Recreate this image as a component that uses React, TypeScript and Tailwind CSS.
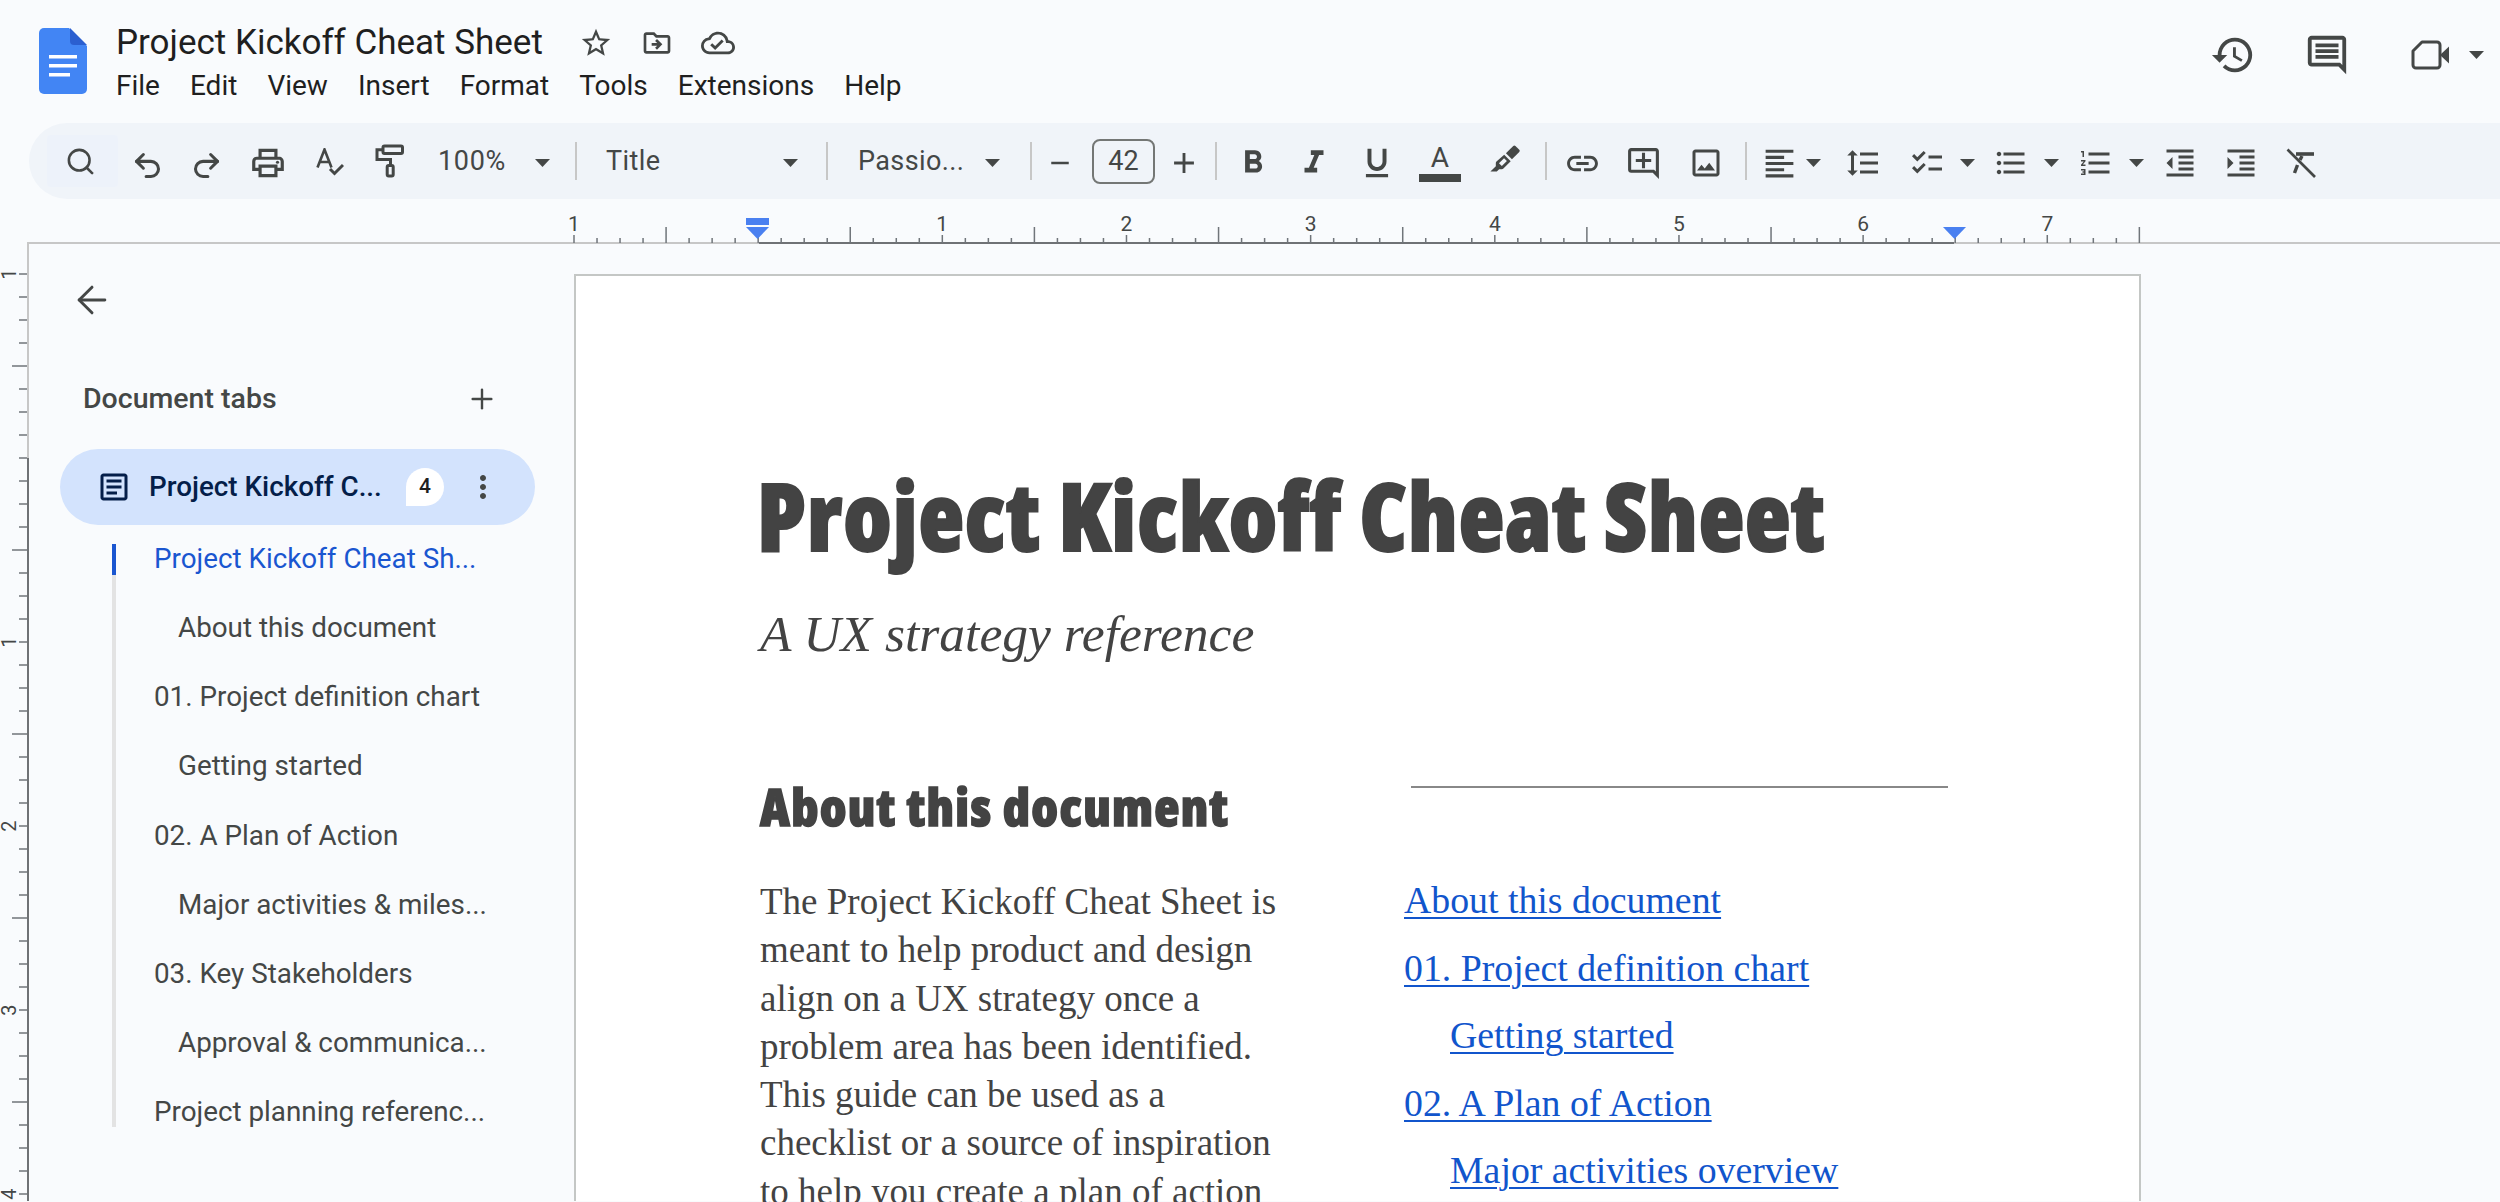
import { ArrowLeft, Plus, Redo2, Search, Undo2 } from 'lucide-react';
import {
  MdAdd,
  MdChecklist,
  MdFormatAlignLeft,
  MdFormatBold,
  MdFormatIndentDecrease,
  MdFormatIndentIncrease,
  MdFormatItalic,
  MdFormatLineSpacing,
  MdFormatListBulleted,
  MdFormatListNumbered,
  MdFormatUnderlined,
  MdHistory,
  MdLink,
  MdMoreVert,
  MdOutlineAddComment,
  MdOutlineArticle,
  MdOutlineCloudDone,
  MdOutlineComment,
  MdOutlineDriveFileMove,
  MdOutlineImage,
  MdOutlineLocalPrintshop,
  MdRemove,
  MdStarBorder,
} from 'react-icons/md';

const MENU = ['File', 'Edit', 'View', 'Insert', 'Format', 'Tools', 'Extensions', 'Help'];

const OUTLINE = [
  { label: 'Project Kickoff Cheat Sh...', indent: false, active: true },
  { label: 'About this document', indent: true },
  { label: '01. Project definition chart', indent: false },
  { label: 'Getting started', indent: true },
  { label: '02. A Plan of Action', indent: false },
  { label: 'Major activities & miles...', indent: true },
  { label: '03. Key Stakeholders', indent: false },
  { label: 'Approval & communica...', indent: true },
  { label: 'Project planning referenc...', indent: false },
];

const BODY = [
  'The Project Kickoff Cheat Sheet is',
  'meant to help product and design',
  'align on a UX strategy once a',
  'problem area has been identified.',
  'This guide can be used as a',
  'checklist or a source of inspiration',
  'to help you create a plan of action',
];

const LINKS = [
  { label: 'About this document', indent: false },
  { label: '01. Project definition chart', indent: false },
  { label: 'Getting started', indent: true },
  { label: '02. A Plan of Action', indent: false },
  { label: 'Major activities overview', indent: true },
];

function Caret() {
  return (
    <svg width="15" height="8" viewBox="0 0 15 8" fill="#444746">
      <path d="M0 0h15L7.5 8z" />
    </svg>
  );
}

function Sep() {
  return <div className="h-[38px] w-[2px] shrink-0 bg-[#c7c7c7]" />;
}

function DocsLogo() {
  return (
    <svg width="48" height="66" viewBox="0 0 48 66" className="shrink-0">
      <path d="M5 0h25l18 18v43a5 5 0 0 1-5 5H5a5 5 0 0 1-5-5V5a5 5 0 0 1 5-5z" fill="#4285f4" />
      <path d="M31 0l17 17H35a4 4 0 0 1-4-4z" fill="#2b5fd0" />
      <path d="M10 27h28v3.5H10zM10 36h28v3.5H10zM10 45h21v3.5H10z" fill="#fff" />
    </svg>
  );
}

function SpellIcon() {
  return (
    <svg width="28" height="30" viewBox="0 0 28 30" fill="none" stroke="#444746" className="mt-[4px]">
      <path d="M1.500 19.500L8.500 1.500l7 18M4 14h9" strokeWidth="2.600" />
      <path d="M14 21l4.500 4.500L27 17" strokeWidth="3" />
    </svg>
  );
}

function PaintRoller() {
  return (
    <svg width="36" height="36" viewBox="0 0 24 24" fill="none" stroke="#444746" strokeWidth="2">
      <rect x="8" y="2" width="13" height="5" rx="1" />
      <path d="M8 4.5H4v6.5h9v4" />
      <rect x="10.8" y="15" width="4" height="7" rx="1" />
    </svg>
  );
}

function Marker() {
  return (
    <svg width="38" height="38" viewBox="0 0 24 24" fill="#444746" className="-mt-[6px]">
      <path d="M17.2 3.2a1 1 0 0 1 1.4 0l2.4 2.4a1 1 0 0 1 0 1.4l-4.6 4.6-3.8-3.8z" />
      <path
        fillRule="evenodd"
        d="M11.5 8.7l4.1 4.1-4.6 4.6a1.5 1.5 0 0 1-1 .4H8.3L6.800 19.300H2.800l3.400-3.400v-2a1.500 1.500 0 0 1 .4-1zM8.200 14l1.800 1.800 3.200-3.100-1.800-1.800z"
      />
    </svg>
  );
}

function ClearFormat() {
  return (
    <svg width="30" height="30" viewBox="0 0 30 30" fill="none" stroke="#444746">
      <path d="M1.500 1.500L29 29" strokeWidth="2.600" />
      <path d="M10 6h18" strokeWidth="3.600" />
      <path d="M16 8l-2 4M11.500 17L8.500 25" strokeWidth="3.400" />
    </svg>
  );
}

function VideoIcon() {
  return (
    <svg width="40" height="32" viewBox="0 0 40 32" fill="none">
      <path d="M12 3h15a3 3 0 0 1 3 3v20a3 3 0 0 1-3 3H6a3 3 0 0 1-3-3V12z" stroke="#444746" strokeWidth="3" strokeLinejoin="round" />
      <path d="M30 16L39 7.500v17z" fill="#444746" />
    </svg>
  );
}

function HRuler() {
  const ticks = Array.from({ length: 69 }, (_, i) => i);
  const labels = [-1, 1, 2, 3, 4, 5, 6, 7];
  return (
    <svg width="2500" height="45" className="block">
      <rect x="27" y="43" width="732" height="2" fill="#c7c7c7" />
      <rect x="759" y="43" width="1195" height="2" fill="#6f7275" />
      <rect x="1954" y="43" width="546" height="2" fill="#c7c7c7" />
      {ticks.map((i) => {
        const x = 574 + i * 23.02;
        const kind = i % 8;
        if (kind === 0) {
          return <rect key={i} x={x - 0.75} y={36} width="1.500" height="8" fill="#70757a" />;
        }
        return <rect key={i} x={x - 0.75} y={kind === 4 ? 28 : 39} width="1.500" height={kind === 4 ? 16 : 5} fill="#70757a" />;
      })}
      {labels.map((n) => (
        <text key={n} x={758 + n * 184.2} y="32" textAnchor="middle" fontSize="21" fontFamily="Roboto" fill="#444746">
          {Math.abs(n)}
        </text>
      ))}
      <rect x="746" y="19" width="23" height="7" fill="#4a80f0" />
      <path d="M746 28h23l-11.500 12z" fill="#4a80f0" />
      <path d="M1943 28h23l-11.500 12z" fill="#4a80f0" />
    </svg>
  );
}

function VRuler() {
  const ticks = Array.from({ length: 42 }, (_, i) => i);
  const labels = [-1, 1, 2, 3, 4];
  return (
    <svg width="29" height="957" className="block shrink-0">
      <rect x="27" y="0" width="2" height="214" fill="#c7c7c7" />
      <rect x="27" y="214" width="2" height="743" fill="#6f7275" />
      {ticks.map((i) => {
        const y = 30 + i * 23;
        const long = i % 8 === 4;
        return <rect key={i} x={long ? 12 : 19} y={y - 0.75} width={long ? 15 : 8} height="1.500" fill="#70757a" />;
      })}
      {labels.map((n) => {
        const y = 214 + n * 184;
        return (
          <text key={n} x="0" y="0" transform={`translate(16 ${y}) rotate(-90)`} textAnchor="middle" fontSize="20" fontFamily="Roboto" fill="#444746">
            {Math.abs(n)}
          </text>
        );
      })}
    </svg>
  );
}

function Toolbar() {
  const icon = 'flex shrink-0 items-center justify-center pt-[4px]';
  return (
    <div className="ml-[29px] flex h-[76px] items-center rounded-l-[38px] bg-[#f0f4f9] pl-[18px] font-['Roboto',sans-serif] text-[#444746]">
      <div className="flex h-[52px] w-[71px] shrink-0 items-center justify-center rounded-[4px] bg-[#edf2fa] pr-[5px]">
        <Search size={31} strokeWidth={2} />
      </div>
      <div className={`${icon} w-[58px]`}><Undo2 size={33} strokeWidth={2.2} className="mt-[4px]" /></div>
      <div className={`${icon} w-[60px]`}><Redo2 size={33} strokeWidth={2.2} className="mt-[4px]" /></div>
      <div className={`${icon} w-[64px]`}><MdOutlineLocalPrintshop size={38} /></div>
      <div className="flex w-[60px] shrink-0 items-center justify-center"><SpellIcon /></div>
      <div className="flex w-[58px] shrink-0 items-center justify-center"><PaintRoller /></div>
      <div className="ml-[20px] w-[88px] text-[27px] tracking-[0.7px]">100%</div>
      <div className={`${icon} w-[32px]`}><Caret /></div>
      <div className="ml-[17px]"><Sep /></div>
      <div className="ml-[29px] w-[168px] text-[27px] tracking-[0.4px]">Title</div>
      <div className={`${icon} w-[32px]`}><Caret /></div>
      <div className="ml-[20px]"><Sep /></div>
      <div className="ml-[30px] w-[118px] text-[27px] tracking-[0.4px]">Passio...</div>
      <div className={`${icon} w-[32px]`}><Caret /></div>
      <div className="ml-[22px]"><Sep /></div>
      <div className={`${icon} w-[56px]`}><MdRemove size={30} /></div>
      <div className="ml-[4px] flex h-[45px] w-[63px] items-center justify-center rounded-[8px] border-2 border-[#747775] text-[27px]">42</div>
      <div className={`${icon} w-[58px]`}><MdAdd size={34} /></div>
      <div className="ml-[2px]"><Sep /></div>
      <div className={`${icon} w-[72px]`}><MdFormatBold size={38} /></div>
      <div className={`${icon} w-[50px]`}><MdFormatItalic size={38} /></div>
      <div className={`${icon} w-[76px]`}><MdFormatUnderlined size={38} /></div>
      <div className={`${icon} w-[50px] flex-col`}>
        <span className="h-[27px] text-[28px] leading-[27px]">A</span>
        <span className="mt-[3px] h-[8px] w-[42px] bg-[#444746]" />
      </div>
      <div className={`${icon} w-[80px]`}><Marker /></div>
      <Sep />
      <div className={`${icon} w-[70px]`}><MdLink size={37} /></div>
      <div className={`${icon} w-[52px]`}><MdOutlineAddComment size={37} /></div>
      <div className={`${icon} w-[74px]`}><MdOutlineImage size={36} /></div>
      <div className="ml-[2px]"><Sep /></div>
      <div className={`${icon} ml-[12px] w-[40px]`}><MdFormatAlignLeft size={37} /></div>
      <div className={`${icon} w-[29px]`}><Caret /></div>
      <div className={`${icon} ml-[15px] w-[40px]`}><MdFormatLineSpacing size={36} /></div>
      <div className={`${icon} ml-[24px] w-[40px]`}><MdChecklist size={36} /></div>
      <div className={`${icon} w-[40px]`}><Caret /></div>
      <div className={`${icon} ml-[4px] w-[40px]`}><MdFormatListBulleted size={36} /></div>
      <div className={`${icon} w-[40px]`}><Caret /></div>
      <div className={`${icon} ml-[5px] w-[40px]`}><MdFormatListNumbered size={36} /></div>
      <div className={`${icon} w-[40px]`}><Caret /></div>
      <div className={`${icon} ml-[4px] w-[40px]`}><MdFormatIndentDecrease size={36} /></div>
      <div className={`${icon} ml-[21px] w-[40px]`}><MdFormatIndentIncrease size={36} /></div>
      <div className={`${icon} ml-[20px] w-[40px]`}><ClearFormat /></div>
    </div>
  );
}

function Sidebar() {
  return (
    <aside className="w-[545px] shrink-0 font-['Roboto',sans-serif] text-[#444746]">
      <div className="ml-[41px] mt-[34px] flex h-[44px] w-[44px] items-center justify-center">
        <ArrowLeft size={44} strokeWidth={1.6} />
      </div>
      <div className="mt-[55px] flex h-[44px] items-center pl-[54px] text-[28.5px] font-medium">
        <span>Document tabs</span>
        <Plus size={32} strokeWidth={1.8} className="ml-[189px]" />
      </div>
      <div className="ml-[31px] mt-[28px] flex h-[76px] w-[475px] items-center rounded-full bg-[#d3e3fd] text-[#041e49]">
        <MdOutlineArticle size={36} className="ml-[36px] shrink-0" />
        <span className="ml-[17px] w-[240px] text-[27.8px] font-medium">Project Kickoff C...</span>
        <span className="ml-[17px] flex h-[38px] w-[38px] items-center justify-center rounded-full rounded-bl-none bg-white text-[21px] font-medium text-[#1f1f1f]">4</span>
        <MdMoreVert size={36} className="ml-[21px] text-[#444746]" />
      </div>
      <div className="relative ml-[83px] mt-[19px] flex h-[583px] w-[400px] flex-col border-l-4 border-[#e3e3e3]">
        <span className="absolute -left-[4px] top-0 h-[31px] w-[4px] bg-[#1a56d0]" />
        <div className="-mt-[20px]">
          {OUTLINE.map((item) => (
            <div
              key={item.label}
              className={`flex h-[69.2px] items-center whitespace-nowrap text-[27.8px] ${item.indent ? 'pl-[62px]' : 'pl-[38px]'} ${item.active ? 'text-[#1a56d0]' : ''}`}
            >
              {item.label}
            </div>
          ))}
        </div>
      </div>
    </aside>
  );
}

function Page() {
  return (
    <main className="mt-[30px] w-[1567px] shrink-0 border-x-2 border-t-2 border-[#c4c7c5] bg-white pl-[184px] text-[#434343]">
      <h1 className="-ml-[3px] pt-[184px] font-['Open_Sans',sans-serif] text-[94px] font-extrabold leading-[110px] tracking-[1px] [-webkit-text-stroke:2px_#434343] [font-stretch:75%]">
        Project Kickoff Cheat Sheet
      </h1>
      <p className="mt-[34px] font-['Liberation_Serif',serif] text-[51.5px] italic leading-[60px]">A UX strategy reference</p>
      <div className="mt-[95px] flex">
        <div className="w-[644px]">
          <h2 className="pt-[12px] font-['Open_Sans',sans-serif] text-[52px] font-extrabold leading-[70px] tracking-[1.3px] [-webkit-text-stroke:1.5px_#434343] [font-stretch:75%]">
            About this document
          </h2>
          <div className="mt-[37px] font-['Liberation_Serif',serif] text-[37px] leading-[48.3px]">
            {BODY.map((line) => (
              <div key={line} className="whitespace-nowrap">{line}</div>
            ))}
          </div>
        </div>
        <div className="w-[560px] pt-[27px]">
          <div className="ml-[7px] h-[2px] w-[537px] bg-[#888888]" />
          <div className="mt-[79px] font-['Liberation_Serif',serif] text-[37.8px] leading-[67.5px] text-[#1155cc]">
            {LINKS.map((link) => (
              <div key={link.label} className={link.indent ? 'pl-[46px]' : ''}>
                <span className="underline decoration-2 underline-offset-4">{link.label}</span>
              </div>
            ))}
          </div>
        </div>
      </div>
    </main>
  );
}

export default function App() {
  return (
    <div className="h-[1202px] w-[2500px] overflow-hidden bg-[#f9fbfd]">
      <header className="flex h-[123px] pl-[39px] pt-[28px] font-['Roboto',sans-serif]">
        <DocsLogo />
        <div className="ml-[29px]">
          <div className="flex h-[30px] items-center">
            <span className="text-[35px] text-[#1f1f1f]">Project Kickoff Cheat Sheet</span>
            <MdStarBorder size={34} className="ml-[36px] text-[#444746]" />
            <MdOutlineDriveFileMove size={32} className="ml-[28px] text-[#444746]" />
            <MdOutlineCloudDone size={34} className="ml-[28px] text-[#444746]" />
          </div>
          <nav className="mt-[13px] flex gap-[30px] text-[28px] leading-[30px] text-[#1f1f1f]">
            {MENU.map((m) => (
              <span key={m}>{m}</span>
            ))}
          </nav>
        </div>
        <div className="ml-auto flex h-[54px] items-center text-[#444746]">
          <MdHistory size={46} />
          <MdOutlineComment size={46} className="ml-[48px]" />
          <div className="ml-[60px]"><VideoIcon /></div>
          <div className="ml-[19px] mr-[16px]"><Caret /></div>
        </div>
      </header>
      <Toolbar />
      <HRuler />
      <div className="flex h-[957px]">
        <VRuler />
        <Sidebar />
        <Page />
      </div>
    </div>
  );
}
